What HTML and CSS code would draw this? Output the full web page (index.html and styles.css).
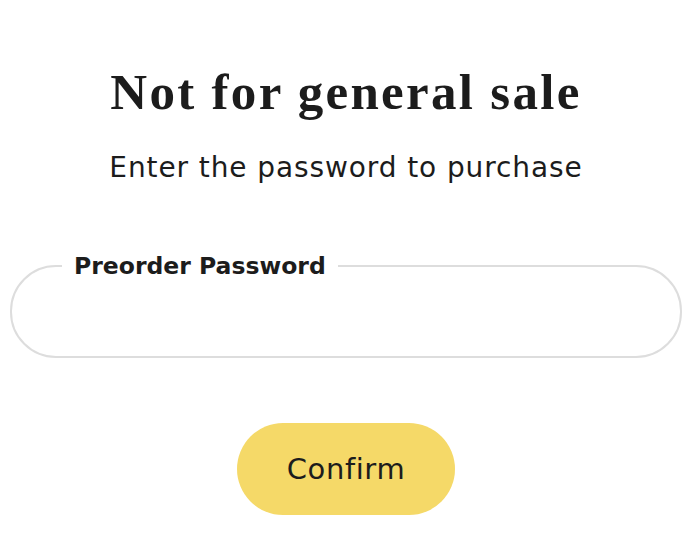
FILE: index.html
```html
<!DOCTYPE html>
<html>
<head>
<meta charset="utf-8">
<link rel="stylesheet" href="styles.css">
</head>
<body>
<main class="page">
  <h1 class="title">Not for general sale</h1>
  <p class="subtitle">Enter the password to purchase</p>
  <fieldset class="field">
    <legend class="field-label">Preorder Password</legend>
    <input class="field-input" type="password" aria-label="Preorder Password">
  </fieldset>
  <div class="actions">
    <button class="btn" type="button">Confirm</button>
  </div>
</main>
</body>
</html>
```
FILE: styles.css
```css
html, body {
  margin: 0;
  padding: 0;
  background: #ffffff;
}
.page {
  width: 700px;
  box-sizing: border-box;
  padding: 64px 18px 0 10px;
  display: flex;
  flex-direction: column;
  align-items: center;
  color: #1c1c1c;
  font-family: "DejaVu Sans", Inter, sans-serif;
}
.title {
  margin: 0;
  font-family: "Liberation Serif", serif;
  font-weight: 700;
  font-size: 51px;
  line-height: 56px;
  letter-spacing: 2.3px;
}
.subtitle {
  margin: 30px 0 0;
  font-size: 28px;
  line-height: 36px;
  font-weight: 400;
  letter-spacing: 0.9px;
}
.field {
  align-self: stretch;
  margin: 65px 0 0;
  padding: 0 40px;
  height: 107px;
  box-sizing: border-box;
  border: 2px solid #dddddd;
  border-radius: 46px;
}
.field-label {
  margin-left: 10px;
  padding: 0 12px;
  font-size: 23.5px;
  font-weight: 700;
  line-height: 30px;
  letter-spacing: 0;
}
.field-input {
  border: 0;
  outline: none;
  width: 100%;
  height: 40px;
  background: transparent;
  font-size: 22px;
}
.actions {
  margin-top: 65px;
  display: flex;
  justify-content: center;
}
.btn {
  width: 218px;
  height: 92px;
  border: 0;
  border-radius: 46px;
  background: #f5d968;
  color: #1c1c1c;
  font-family: "DejaVu Sans", Inter, sans-serif;
  font-size: 29px;
  font-weight: 400;
  letter-spacing: 0.6px;
}
```
